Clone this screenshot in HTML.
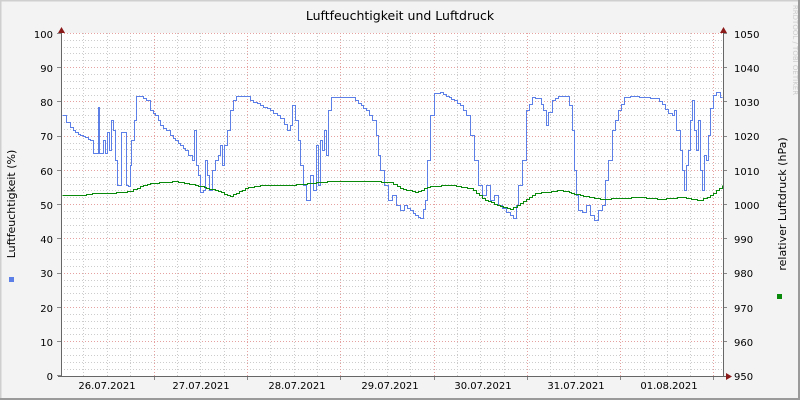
<!DOCTYPE html>
<html><head><style>
html,body{margin:0;padding:0;background:#f3f3f3}
svg{display:block}
text{font-family:"DejaVu Sans","Liberation Sans",sans-serif;font-size:10px;fill:#000}
</style></head><body>
<svg width="800" height="400" xmlns="http://www.w3.org/2000/svg">
<rect x="0" y="0" width="800" height="400" fill="#f3f3f3"/>
<path d="M0,0.5H800M0.5,0V400" stroke="#cfcfcf" stroke-width="2"/>
<path d="M0,399H800M799,0V400" stroke="#9a9a9a" stroke-width="2"/>
<rect x="61" y="33" width="662" height="343" fill="#fff"/>
<g id="grid" stroke-width="1" shape-rendering="crispEdges">
<g stroke="#cccccc" stroke-dasharray="1,2">
<path d="M61,369.5H723M61,362.5H723M61,355.5H723M61,348.5H723M61,334.5H723M61,328.5H723M61,321.5H723M61,314.5H723M61,300.5H723M61,293.5H723M61,286.5H723M61,280.5H723M61,266.5H723M61,259.5H723M61,252.5H723M61,245.5H723M61,232.5H723M61,225.5H723M61,218.5H723M61,211.5H723M61,197.5H723M61,190.5H723M61,184.5H723M61,177.5H723M61,163.5H723M61,156.5H723M61,149.5H723M61,143.5H723M61,129.5H723M61,122.5H723M61,115.5H723M61,108.5H723M61,95.5H723M61,88.5H723M61,81.5H723M61,74.5H723M61,60.5H723M61,53.5H723M61,47.5H723M61,40.5H723"/>
<path d="M83.5,33V376M107.5,33V376M130.5,33V376M177.5,33V376M200.5,33V376M224.5,33V376M270.5,33V376M294.5,33V376M317.5,33V376M364.5,33V376M387.5,33V376M410.5,33V376M457.5,33V376M480.5,33V376M504.5,33V376M550.5,33V376M574.5,33V376M597.5,33V376M644.5,33V376M667.5,33V376M690.5,33V376"/>
</g>
<g stroke="#e5a0a0" stroke-dasharray="1,2">
<path d="M61,341.5H723M61,307.5H723M61,273.5H723M61,238.5H723M61,204.5H723M61,170.5H723M61,136.5H723M61,101.5H723M61,67.5H723M61,33.5H723"/>
<path d="M154.5,33V376M247.5,33V376M340.5,33V376M434.5,33V376M527.5,33V376M620.5,33V376M713.5,33V376"/>
</g>
<g stroke="#888">
<path d="M57,375.5H61M57,341.5H61M57,307.5H61M57,273.5H61M57,238.5H61M57,204.5H61M57,170.5H61M57,136.5H61M57,101.5H61M57,67.5H61M57,33.5H61"/>
<path d="M723,341.5H727M723,307.5H727M723,273.5H727M723,238.5H727M723,204.5H727M723,170.5H727M723,136.5H727M723,101.5H727M723,67.5H727M723,33.5H727"/>
<path d="M154.5,376V380M247.5,376V380M340.5,376V380M434.5,376V380M527.5,376V380M620.5,376V380M713.5,376V380"/>
</g>
</g>
<polyline class="step" shape-rendering="crispEdges" fill="none" stroke="#5b7fe6" stroke-width="1" points="62,115 66,122 70,127 75,132 80,135 85,137 90,140 93,153 96,153 98,107 99,153 101,153 103,140 105,153 107,132 109,150 111,120 113,130 115,160 117,185 119,185 121,132 124,132 126,185 128,186 130,165 131,140 134,120 136,96 140,96 146,100 150,110 155,115 160,125 166,130 170,135 175,140 180,145 185,150 188,155 192,160 194,130 196,165 198,175 200,192 203,190 205,160 207,175 209,190 212,170 215,160 218,155 220,145 222,165 224,145 227,130 230,110 233,100 236,96 246,96 250,100 260,105 270,110 280,118 287,130 290,125 292,105 295,120 298,140 300,165 303,185 306,200 310,175 313,190 316,145 318,185 320,140 322,150 324,130 326,155 328,110 331,97 352,97 358,103 366,110 372,120 376,135 378,155 380,170 384,185 388,200 392,195 396,205 400,210 404,205 410,210 415,215 420,218 425,200 427,160 430,115 434,93 440,92 446,96 454,100 460,105 466,115 470,135 474,160 478,185 482,195 486,185 490,200 494,195 498,205 502,208 506,212 510,215 513,218 516,205 518,185 522,160 526,110 532,97 538,98 543,110 546,125 548,112 552,100 558,96 566,96 569,105 572,130 574,170 576,195 578,210 582,212 586,205 590,215 594,220 598,210 602,205 605,180 608,160 612,130 618,110 624,97 630,96 656,98 662,104 668,113 672,115 674,110 676,130 680,150 682,170 684,190 686,165 688,150 690,120 692,100 694,130 696,150 698,120 700,170 702,190 704,155 706,160 708,135 710,108 713,95 716,92 720,97 722,97"/>
<polyline class="step" shape-rendering="crispEdges" fill="none" stroke="#0a8a0a" stroke-width="1" points="62,195 80,195 95,193 110,193 130,191 140,186 150,183 175,181 195,185 215,190 230,196 245,188 260,185 290,185 310,183 330,181 370,181 390,182 400,188 415,192 430,186 450,185 470,188 485,200 500,206 510,209 520,203 535,193 560,190 580,195 600,199 620,198 640,197 660,199 680,197 700,200 710,195 722,185"/>
<path d="M61.5,30V377M723.5,30V377M58,376.5H728" stroke="#666" stroke-width="1" shape-rendering="crispEdges"/>
<path d="M58,33L61.5,27L65,33Z M720,33L723.5,27L727,33Z M726,373L732,376.5L726,380Z" fill="#8b1a1a"/>
<g text-anchor="end">
<text x="53" y="380">0</text><text x="53" y="346">10</text><text x="53" y="312">20</text><text x="53" y="277">30</text><text x="53" y="243">40</text><text x="53" y="209">50</text><text x="53" y="175">60</text><text x="53" y="140">70</text><text x="53" y="106">80</text><text x="53" y="72">90</text><text x="53" y="38">100</text>
</g>
<g>
<text x="734" y="380">950</text><text x="734" y="346">960</text><text x="734" y="312">970</text><text x="734" y="277">980</text><text x="734" y="243">990</text><text x="734" y="209">1000</text><text x="734" y="175">1010</text><text x="734" y="140">1020</text><text x="734" y="106">1030</text><text x="734" y="72">1040</text><text x="734" y="38">1050</text>
</g>
<g text-anchor="middle">
<text x="107" y="389">26.07.2021</text><text x="201" y="389">27.07.2021</text><text x="297" y="389">28.07.2021</text><text x="390" y="389">29.07.2021</text><text x="483" y="389">30.07.2021</text><text x="576" y="389">31.07.2021</text><text x="669" y="389">01.08.2021</text>
<text x="400" y="20" style="font-size:12.5px">Luftfeuchtigkeit und Luftdruck</text>
<text transform="translate(15,204) rotate(-90)" style="font-size:11px">Luftfeuchtigkeit (%)</text>
<text transform="translate(786,204) rotate(-90)" style="font-size:11px">relativer Luftdruck (hPa)</text>
<text transform="translate(793,50) rotate(90)" style="font-size:7px;fill:#ccc">RRDTOOL / TOBI OETIKER</text>
</g>
<rect x="9" y="277" width="5" height="5" fill="#5b7fe6"/>
<rect x="777" y="294" width="5" height="5" fill="#0a8a0a"/>
</svg>
<script>
document.querySelectorAll('polyline.step').forEach(function(p){
 var pts=p.getAttribute('points').trim().split(/\s+/).map(function(s){return s.split(',').map(Number)});
 var out=[[pts[0][0]+0.5,pts[0][1]+0.5]];
 for(var i=1;i<pts.length;i++){var a=pts[i-1],b=pts[i];
  var n=Math.max(1,Math.round((b[0]-a[0])/3));
  for(var k=1;k<=n;k++){var x=Math.round(a[0]+(b[0]-a[0])*k/n)+0.5,y=Math.round(a[1]+(b[1]-a[1])*k/n)+0.5;
   var l=out[out.length-1];out.push([x,l[1]]);out.push([x,y]);}}
 p.setAttribute('points',out.map(function(q){return q[0]+','+q[1]}).join(' '));
});
</script>
</body></html>
